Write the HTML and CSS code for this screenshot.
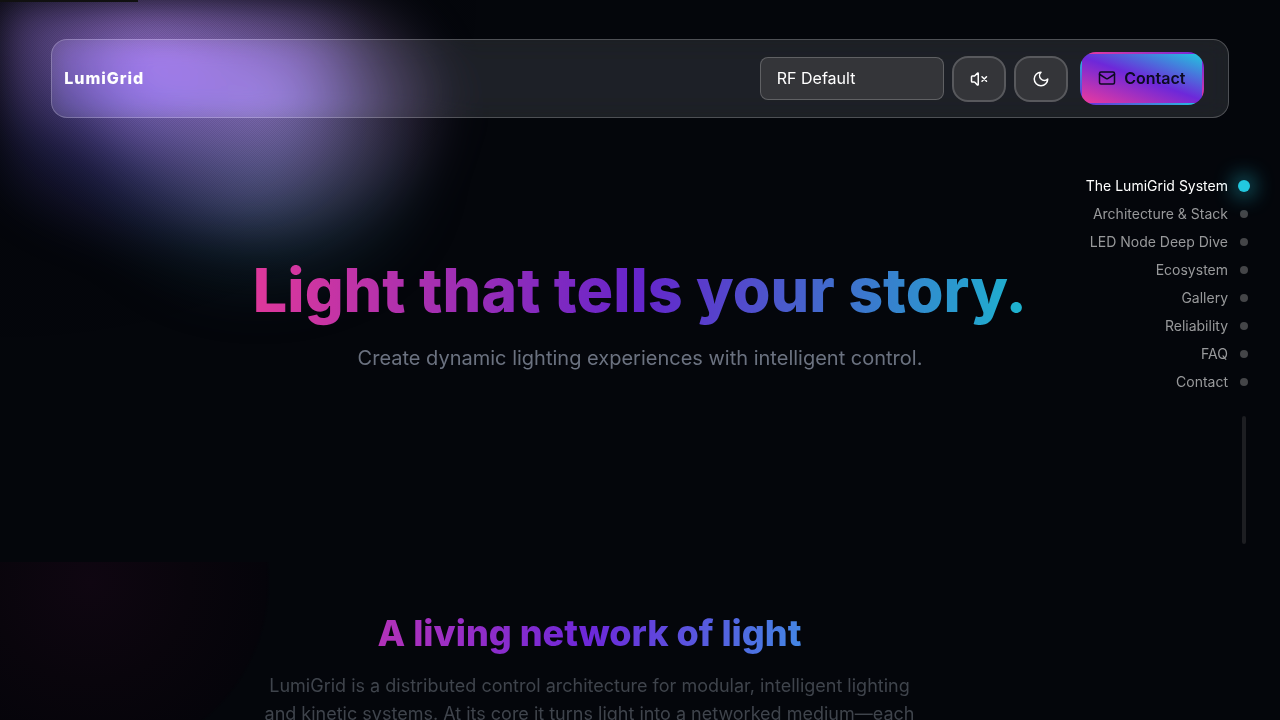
FILE: index.html
```html
<!DOCTYPE html>
<html lang="en">
<head>
<meta charset="utf-8">
<meta name="viewport" content="width=device-width, initial-scale=1">
<title>LumiGrid</title>
<link rel="stylesheet" href="styles.css">
</head>
<body>
<div class="aurora" aria-hidden="true"></div>
<div class="progress" aria-hidden="true"></div>
<header class="topbar">
  <a class="brand" href="#top">LumiGrid</a>
  <div class="controls">
    <select class="preset" aria-label="Preset"><option>RF Default</option></select>
    <button class="icon-button" type="button" aria-label="Unmute">
      <svg viewBox="0 0 24 24"><path d="M11 4.7a.7.7 0 0 0-1.2-.5L6.4 7.6A1.4 1.4 0 0 1 5.4 8H3a1 1 0 0 0-1 1v6a1 1 0 0 0 1 1h2.4a1.4 1.4 0 0 1 1 .4l3.4 3.4a.7.7 0 0 0 1.2-.5zM22 9l-6 6M16 9l6 6"/></svg>
    </button>
    <button class="icon-button" type="button" aria-label="Dark mode">
      <svg viewBox="0 0 24 24"><path d="M12 3a6 6 0 0 0 9 9 9 9 0 1 1-9-9z"/></svg>
    </button>
    <button class="contact" type="button">
      <svg viewBox="0 0 24 24"><rect x="2" y="4" width="20" height="16" rx="2"/><path d="m22 7-9 5.700a1.900 1.900 0 0 1-2 0L2 7"/></svg>
      Contact
    </button>
  </div>
</header>
<nav class="rail" aria-label="Sections">
  <a class="rail-link active" href="#top">The LumiGrid System</a>
  <a class="rail-link" href="#stack">Architecture &amp; Stack</a>
  <a class="rail-link" href="#node">LED Node Deep Dive</a>
  <a class="rail-link" href="#ecosystem">Ecosystem</a>
  <a class="rail-link" href="#gallery">Gallery</a>
  <a class="rail-link" href="#reliability">Reliability</a>
  <a class="rail-link" href="#faq">FAQ</a>
  <a class="rail-link" href="#contact">Contact</a>
  <span class="rail-track"></span>
</nav>
<main>
  <section class="hero" id="top">
    <h1 class="hero-title">Light that tells your story.</h1>
    <p class="hero-text">Create dynamic lighting experiences with intelligent control.</p>
  </section>
  <section class="intro">
    <div class="intro-inner">
      <h2 class="intro-title">A living network of light</h2>
      <p class="intro-text">LumiGrid is a distributed control architecture for modular, intelligent lighting and kinetic systems. At its core it turns light into a networked medium—each</p>
    </div>
  </section>
</main>
</body>
</html>
```
FILE: styles.css
```css
* { box-sizing: border-box; }
html { scrollbar-width: none; background: #04060b; }
body {
  margin: 0;
  height: 100vh;
  overflow: hidden;
  color: #fff;
  font-family: Inter, sans-serif;
  font-size: 16px;
  line-height: 24px;
}
.aurora, .aurora::before, .aurora::after {
  position: fixed;
  inset: 0;
  z-index: -1;
}
.aurora::before {
  content: "";
  inset: -100px;
  padding: 100px;
  background-origin: content-box;
  background-repeat: no-repeat;
  filter: blur(20px);
  background-image:
    radial-gradient(ellipse 230px 130px at 140px 30px, rgb(155 115 200 / 72%), rgb(140 105 185 / 42%) 50%, transparent),
    radial-gradient(ellipse 190px 150px at 270px 105px, rgb(160 135 215 / 75%), rgb(140 115 175 / 42%) 50%, transparent),
    radial-gradient(ellipse 220px 170px at 160px 85px, rgb(125 110 235 / 82%), rgb(80 75 180 / 38%) 50%, transparent),
    radial-gradient(ellipse 180px 130px at 260px 185px, rgb(35 80 105 / 60%), rgb(25 65 85 / 30%) 50%, transparent);
}
.aurora::after {
  content: "";
  right: auto;
  bottom: auto;
  width: 480px;
  height: 340px;
  background: repeating-conic-gradient(rgb(0 0 0 / 8%) 0 25%, transparent 0 50%) 0 0 / 2px 2px;
  mask: radial-gradient(ellipse 480px 340px at 0 0, #000 70%, transparent);
}
.progress {
  position: fixed;
  inset: 0 auto auto 0;
  z-index: 3;
  width: 138px;
  height: 2px;
  background: #111;
}
.topbar {
  position: fixed;
  inset: 39px 4vw auto;
  z-index: 2;
  display: flex;
  align-items: center;
  justify-content: space-between;
  padding: 12px 24px 12px 12px;
  border: 1px solid rgb(255 255 255 / 22%);
  border-radius: 16px;
  background: rgb(255 255 255 / 10%);
  backdrop-filter: blur(12px) saturate(130%) brightness(120%);
}
.brand {
  padding-bottom: 2px;
  color: #fff;
  font-weight: 800;
  letter-spacing: 1px;
  text-decoration: none;
}
.controls { display: flex; align-items: center; gap: 8px; }
.preset {
  appearance: none;
  width: 184px;
  height: 43px;
  padding: 0 16px 2px;
  border: 1px solid rgb(255 255 255 / 22%);
  border-radius: 8px;
  background: #343539;
  color: #fff;
  font: inherit;
}
.icon-button {
  display: grid;
  place-items: center;
  width: 54px;
  height: 46px;
  padding: 0;
  border: 2px solid #58595d;
  border-radius: 16px;
  background: #343539;
  color: #fff;
}
svg {
  width: 18px;
  height: 18px;
  fill: none;
  stroke: currentColor;
  stroke-width: 2;
  stroke-linecap: round;
  stroke-linejoin: round;
}
.contact {
  display: flex;
  align-items: center;
  justify-content: center;
  gap: 8px;
  min-width: 124px;
  height: 53px;
  margin-left: 4px;
  padding: 0 16px 1px;
  border: 2px solid transparent;
  border-radius: 16px;
  background: linear-gradient(20deg, #ec3a9e, #6d28d9 50%, #22c6df);
  color: #0c0b22;
  font: inherit;
  font-weight: 600;
}
.rail {
  position: fixed;
  top: 172px;
  right: 32px;
  z-index: 1;
  display: flex;
  flex-direction: column;
  align-items: flex-end;
}
.rail-link {
  display: flex;
  align-items: center;
  gap: 12px;
  height: 28px;
  color: #98999b;
  font-size: 14px;
  line-height: 20px;
  text-decoration: none;
}
.rail-link::after {
  content: "";
  width: 8px;
  height: 8px;
  border-radius: 50%;
  background: #444548;
}
.rail-link.active { color: #fff; }
.rail-link.active::after {
  background: #22c8df;
  transform: scale(1.5);
  box-shadow: 0 0 14px 1px #22c8df;
}
.rail-track {
  width: 4px;
  height: 128px;
  margin: 20px 2px 0 0;
  border-radius: 2px;
  background: #1d1e22;
}
.hero {
  display: flex;
  flex-direction: column;
  align-items: center;
  height: 562px;
  padding-top: 250px;
  text-align: center;
}
.hero-title, .intro-title {
  background: linear-gradient(95deg, #e0389a, #6525cb 50%, #1cb5cf);
  background-clip: text;
  color: transparent;
  font-weight: 800;
}
.hero-title {
  margin: 0;
  font-size: 61px;
  line-height: 80px;
}
.hero-text {
  margin: 14px 0 0;
  color: #6b7280;
  font-size: 20px;
  line-height: 28px;
}
.intro {
  padding: 47px 101px 48px 0;
  background: radial-gradient(circle 180px at 90px 20px, #0f0611, #09050c 55%, #05040a 98%, transparent);
}
.intro-inner { max-width: 768px; margin: 0 auto; text-align: center; }
.intro-title {
  margin: 0;
  background-image: linear-gradient(95deg, #ec3a9e, #6d28d9 50%, #22d3ee);
  font-size: 36px;
  line-height: 48px;
}
.intro-text {
  max-width: 672px;
  margin: 15px auto 0;
  color: #3f444c;
  font-size: 18px;
  line-height: 28px;
}
```
